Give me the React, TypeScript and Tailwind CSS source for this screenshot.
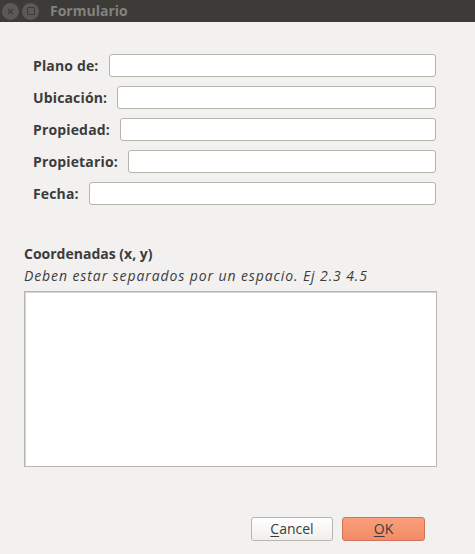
import React from "react";

const font = { fontFamily: '"Open Sans", "Noto Sans", sans-serif' };

function Field({ label }: { label: string }) {
  return (
    <div className="flex items-center h-[23px] gap-[10px]">
      <span className="text-[14px] font-bold text-[#3c3c3c] whitespace-nowrap leading-none tracking-[0.15px]">{label}</span>
      <div className="flex-1 h-[23px] bg-white border border-[#b6b4ad] rounded-[3px]" />
    </div>
  );
}

export default function App() {
  return (
    <div className="w-[475px] h-[554px] bg-[#f2f1f0] flex flex-col overflow-hidden" style={font}>
      <div className="h-[22px] bg-[#3c3b37] flex items-center pl-[2px] shrink-0">
        <div className="w-[17px] h-[17px] rounded-full bg-[#5a5955] flex items-center justify-center">
          <svg width="7" height="7" viewBox="0 0 7 7">
            <path d="M1 1L6 6M6 1L1 6" stroke="#3c3b37" strokeWidth="1.3" />
          </svg>
        </div>
        <div className="w-[17px] h-[17px] rounded-full bg-[#5a5955] flex items-center justify-center ml-[3px]">
          <div className="w-[8px] h-[8px] border border-[#3c3b37] rounded-[1px]" />
        </div>
        <span className="ml-[11px] text-[14px] font-bold text-[#838280] leading-none">Formulario</span>
      </div>
      <div className="flex flex-col gap-[9px] pl-[33px] pr-[39px] pt-[32px]">
        <Field label="Plano de:" />
        <Field label="Ubicación:" />
        <Field label="Propiedad:" />
        <Field label="Propietario:" />
        <Field label="Fecha:" />
      </div>
      <div className="pl-[24px] pr-[38px] mt-[40px] flex flex-col">
        <div className="text-[14px] font-bold text-[#3c3c3c] leading-[18px]">Coordenadas (x, y)</div>
        <div className="text-[14px] italic text-[#3c3c3c] leading-[18px] mt-[4px] tracking-[0.9px]">
          Deben estar separados por un espacio. Ej 2.3 4.5
        </div>
        <div className="mt-[6px] h-[176px] bg-white border border-[#b8b6b0] shadow-[inset_1px_1px_0_#d6d4cf]" />
      </div>
      <div className="mt-auto mb-[13px] flex justify-end gap-[9px] pr-[50px]">
        <button className="w-[82px] h-[24px] rounded-[3px] border border-[#b7b5ae] bg-gradient-to-b from-[#ffffff] to-[#f0efed] text-[14px] text-[#3c3c3c] leading-none">
          <span className="underline underline-offset-2">C</span>ancel
        </button>
        <button className="w-[83px] h-[24px] rounded-[3px] border border-[#d0735a] bg-gradient-to-b from-[#f99f7b] to-[#f28c65] text-[14px] text-[#3c3c3c] leading-none">
          <span className="underline underline-offset-2">O</span>K
        </button>
      </div>
    </div>
  );
}
